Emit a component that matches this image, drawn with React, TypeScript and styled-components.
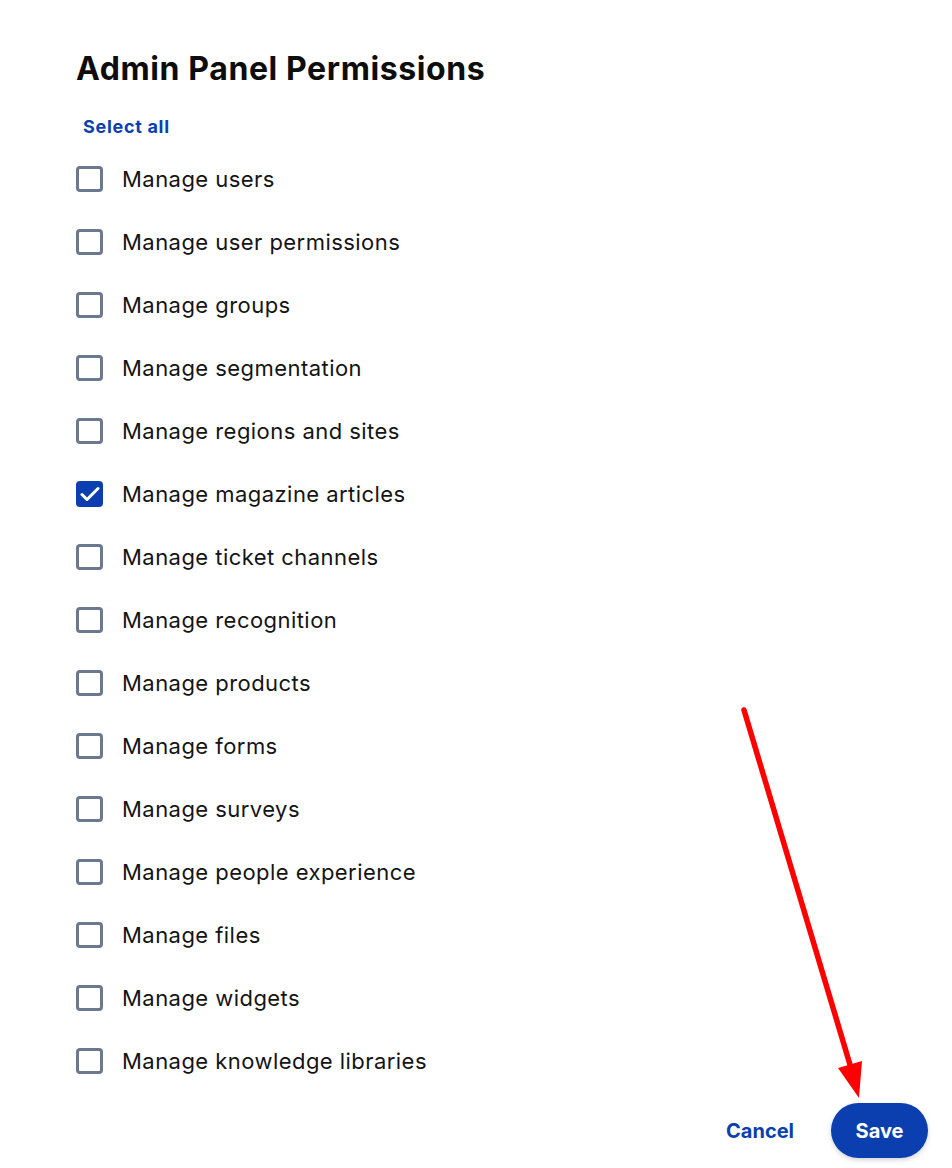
import { useState } from 'react';
import styled, { createGlobalStyle } from 'styled-components';

const GlobalStyle = createGlobalStyle`
  html, body {
    margin: 0;
    padding: 0;
    background: #ffffff;
  }
  body {
    font-family: Inter, "Noto Sans", "Liberation Sans", sans-serif;
    color: #111111;
  }
`;

const Page = styled.div`
  position: relative;
  width: 952px;
  height: 1168px;
  box-sizing: border-box;
  padding: 46px 24px 0 76px;
  display: flex;
  flex-direction: column;
  overflow: hidden;
`;

const Title = styled.h1`
  margin: 0;
  font-size: 32px;
  line-height: 46px;
  font-weight: 700;
  letter-spacing: 0.6px;
  color: #0d0d0d;
`;

const LinkButton = styled.button<{ $size?: number }>`
  background: none;
  border: none;
  padding: 0;
  font-family: inherit;
  font-size: ${p => p.$size ?? 18}px;
  font-weight: 700;
  letter-spacing: ${p => (p.$size ? 0 : 0.7)}px;
  color: #0b3faf;
  cursor: pointer;
`;

const SelectAllRow = styled.div`
  margin-top: 21px;
  padding-left: 7px;
  height: 26px;
  display: flex;
  align-items: center;
`;

const List = styled.div`
  margin-top: 27px;
  display: flex;
  flex-direction: column;
  gap: 37px;
`;

const Row = styled.label`
  display: flex;
  align-items: center;
  gap: 19px;
  height: 26px;
  cursor: pointer;
`;

const Box = styled.span<{ $checked: boolean }>`
  width: 27px;
  height: 26px;
  box-sizing: border-box;
  border-radius: 4px;
  border: ${p => (p.$checked ? 'none' : '3px solid #6c7790')};
  background: ${p => (p.$checked ? '#0b3faf' : '#ffffff')};
  display: flex;
  align-items: center;
  justify-content: center;
  flex-shrink: 0;
`;

const Label = styled.span`
  font-size: 22px;
  line-height: 26px;
  letter-spacing: 0.45px;
  color: #141414;
`;

const Footer = styled.div`
  margin-top: auto;
  margin-bottom: 10px;
  display: flex;
  justify-content: flex-end;
  align-items: center;
  gap: 37px;
`;

const SaveButton = styled.button`
  width: 97px;
  height: 55px;
  border: none;
  border-radius: 28px;
  background: #0b3faf;
  color: #ffffff;
  font-family: inherit;
  font-size: 20px;
  font-weight: 700;
  box-shadow: 0 2px 5px rgba(0, 0, 0, 0.18);
  cursor: pointer;
`;

const Arrow = styled.svg`
  position: absolute;
  left: 0;
  top: 0;
  pointer-events: none;
`;

const permissions = [
  'Manage users',
  'Manage user permissions',
  'Manage groups',
  'Manage segmentation',
  'Manage regions and sites',
  'Manage magazine articles',
  'Manage ticket channels',
  'Manage recognition',
  'Manage products',
  'Manage forms',
  'Manage surveys',
  'Manage people experience',
  'Manage files',
  'Manage widgets',
  'Manage knowledge libraries',
];

function App() {
  const [checked, setChecked] = useState<string[]>(['Manage magazine articles']);

  const toggle = (name: string) => {
    setChecked(prev => (prev.includes(name) ? prev.filter(n => n !== name) : [...prev, name]));
  };

  return (
    <>
      <GlobalStyle />
      <Page>
        <Title>Admin Panel Permissions</Title>
        <SelectAllRow>
          <LinkButton onClick={() => setChecked(permissions)}>Select all</LinkButton>
        </SelectAllRow>
        <List>
          {permissions.map(p => {
            const on = checked.includes(p);
            return (
              <Row key={p} onClick={() => toggle(p)}>
                <Box $checked={on}>
                  {on && (
                    <svg width="20" height="16" viewBox="0 0 20 16">
                      <path d="M2 8.5 L7 13.5 L18 2.5" fill="none" stroke="#ffffff" strokeWidth="3" strokeLinecap="round" strokeLinejoin="round" />
                    </svg>
                  )}
                </Box>
                <Label>{p}</Label>
              </Row>
            );
          })}
        </List>
        <Footer>
          <LinkButton $size={20}>Cancel</LinkButton>
          <SaveButton>Save</SaveButton>
        </Footer>
        <Arrow width="952" height="1168" viewBox="0 0 952 1168">
          <line x1="744" y1="710" x2="851" y2="1068" stroke="#ff0000" strokeWidth="5.5" strokeLinecap="round" />
          <polygon points="838,1068 862,1061 859,1098" fill="#ff0000" />
        </Arrow>
      </Page>
    </>
  );
}

export default App;
